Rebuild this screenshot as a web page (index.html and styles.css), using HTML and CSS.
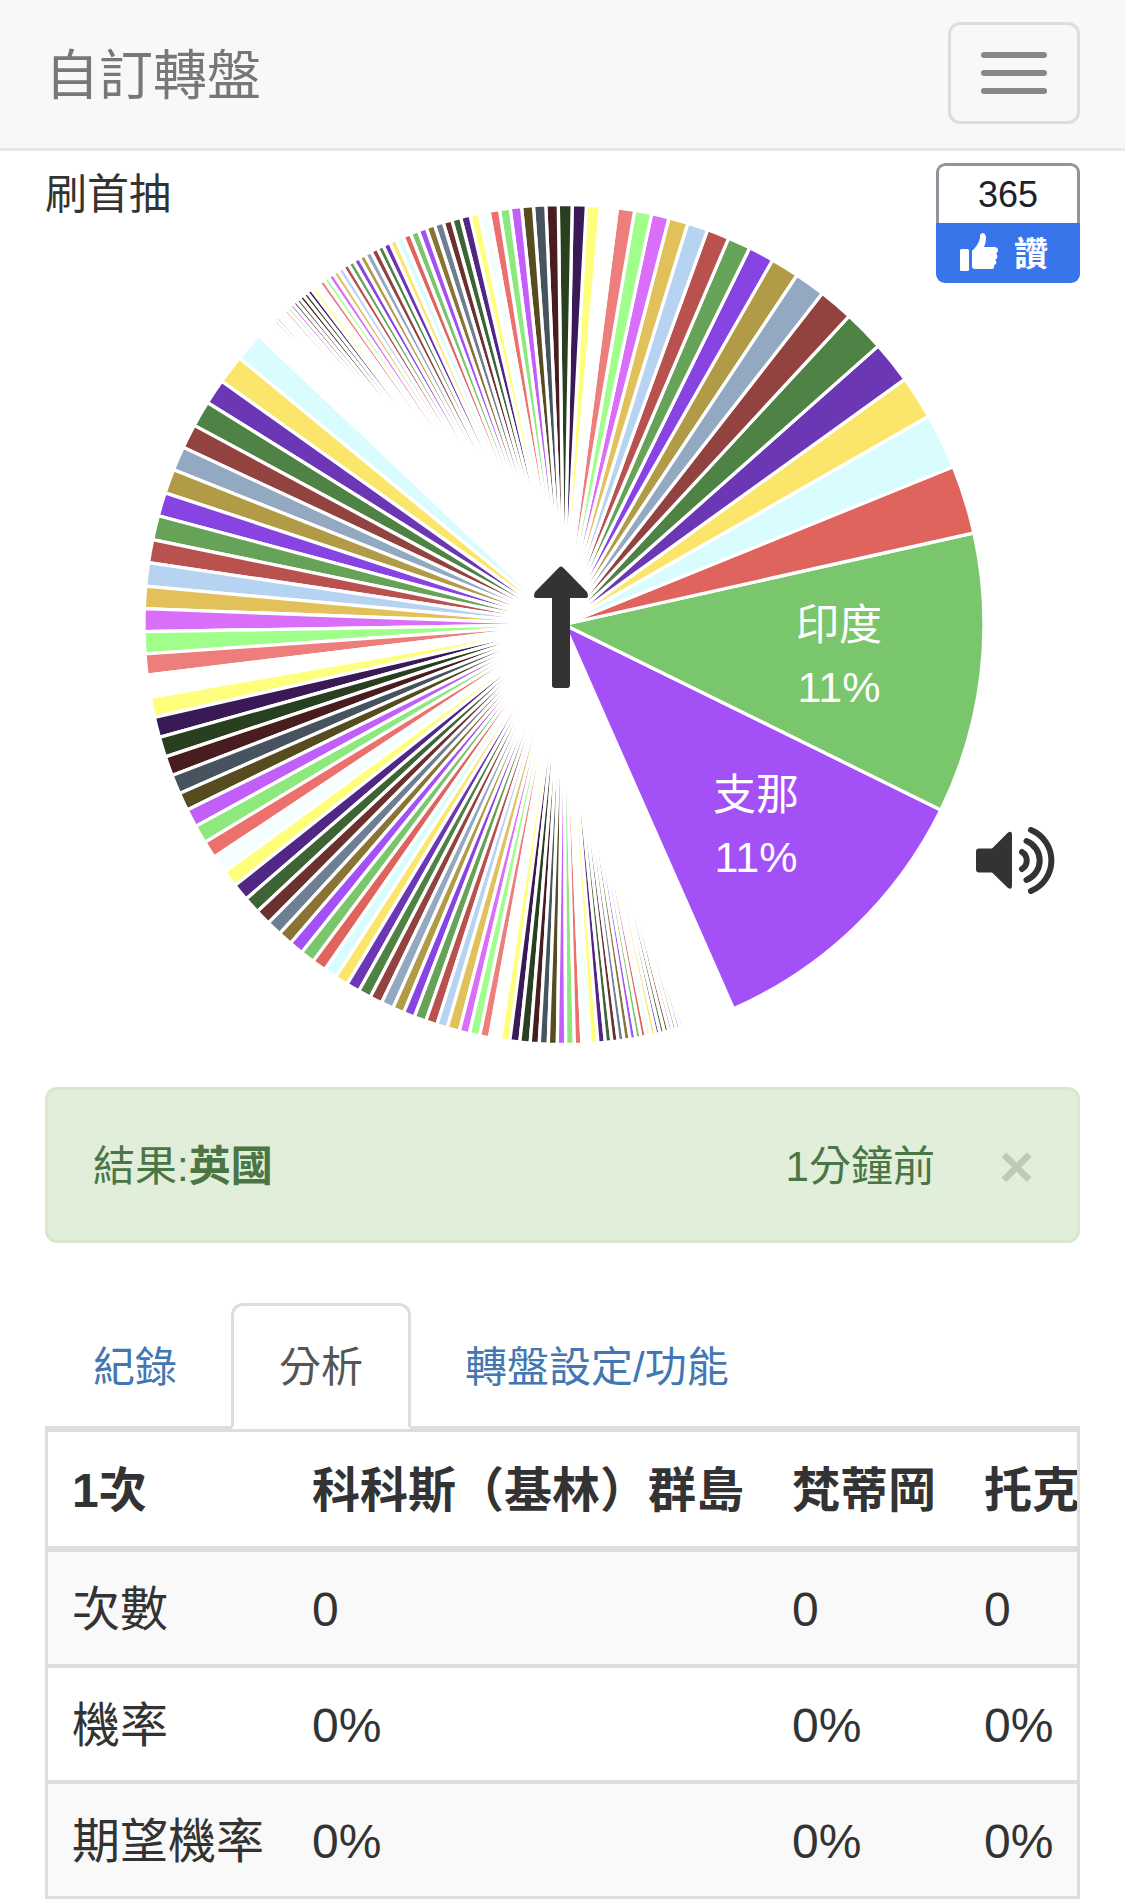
FILE: index.html
```html
<!DOCTYPE html>
<html lang="zh-Hant">
<head>
    <meta charset="UTF-8">
    <meta name="viewport" content="width=device-width, initial-scale=1.0">
    <title>自訂轉盤</title>
    <link rel="stylesheet" href="styles.css">
</head>
<body>

    <nav class="navbar">
        <a class="navbar-brand" href="#">自訂轉盤</a>
        <button type="button" class="navbar-toggle" aria-label="Menu">
            <span class="icon-bar"></span>
            <span class="icon-bar"></span>
            <span class="icon-bar"></span>
        </button>
    </nav>

    <main class="container">
        <!-- Wheel -->
        <section class="stage">
            <svg class="wheel" viewBox="0 0 1035 936">
                <g id="slices" class="slices"></g>
                <g class="slice-label">
                    <text x="794" y="489">印度</text>
                    <text x="794" y="551">11%</text>
                    <text x="711" y="659">支那</text>
                    <text x="711" y="721">11%</text>
                </g>
                <path class="arrow" d="M514 416.500 Q516 414.500 518 416.500 L542 441 Q544.500 446.500 541 447 H525 V534 Q525 537 522 537 H510 Q507 537 507 534 V447 H491 Q487.500 446.500 490 441 Z"/>
            </svg>
            <h1 class="title">刷首抽</h1>
            <div class="like">
                <span class="like-count">365</span>
                <button type="button" class="like-btn">
                    <svg class="like-icon" viewBox="0 0 38 38">
                        <rect x="0" y="16" width="9" height="22" rx="1.500"/>
                        <path d="M12 18 C16 14 19 10 20 5 L20 2 Q21 0 23 0 Q26 1 26 5 Q26 10 24 14 H34 Q38 14 38 17 Q38 20 36 20.500 Q38 22 37 25 Q37 26 35 26.500 Q37 28 36 31 Q35 32 34 32 Q35 36 31 36 H15 Q12 36 12 33 Z"/>
                    </svg>
                    讚
                </button>
            </div>
            <button type="button" class="sound" aria-label="Sound">
                <svg class="sound-icon" viewBox="0 0 79 67">
                    <path class="sound-body" d="M3 21.500 H16 L32 5.500 Q36 3 36 8 V58 Q36 63.500 32 61 L16 45.500 H3 Q0 45.500 0 42.500 V24.500 Q0 21.500 3 21.500 Z"/>
                    <path class="sound-wave" d="M46 25 A10 10 0 0 1 46 42 M50.500 14 A21 21 0 0 1 50.500 53 M55 3 A33 33 0 0 1 55 64"/>
                </svg>
            </button>
        </section>

        <!-- Last result -->
        <div class="alert">
            <span>結果:<strong>英國</strong></span>
            <span class="alert-time">1分鐘前</span>
            <button type="button" class="close" aria-label="Close">×</button>
        </div>

        <!-- Tabs -->
        <ul class="nav-tabs">
            <li><a href="#log">紀錄</a></li>
            <li class="active"><a href="#stats">分析</a></li>
            <li><a href="#settings">轉盤設定/功能</a></li>
        </ul>

        <div class="table-responsive" id="stats">
            <table class="table">
                <thead>
                    <tr>
                        <th>1次</th>
                        <th>科科斯（基林）群島</th>
                        <th>梵蒂岡</th>
                        <th>托克勞</th>
                    </tr>
                </thead>
                <tbody>
                    <tr>
                        <td>次數</td>
                        <td>0</td>
                        <td>0</td>
                        <td>0</td>
                    </tr>
                    <tr>
                        <td>機率</td>
                        <td>0%</td>
                        <td>0%</td>
                        <td>0%</td>
                    </tr>
                    <tr>
                        <td>期望機率</td>
                        <td>0%</td>
                        <td>0%</td>
                        <td>0%</td>
                    </tr>
                </tbody>
            </table>
        </div>
    </main>

    <script src="wheel.js"></script>
</body>
</html>
```
FILE: styles.css
```css
* {
    box-sizing: border-box;
}

body {
    margin: 0;
    background-color: #fff;
    color: #333;
    font-family: "Liberation Sans", "Noto Sans CJK TC", sans-serif;
    font-size: 42px;
    line-height: 60px;
}

button {
    font-family: inherit;
    cursor: pointer;
}

a {
    color: #4277b3;
    text-decoration: none;
}

/* Navbar */
.navbar {
    display: flex;
    justify-content: space-between;
    align-items: center;
    padding: 22px 45px 24px;
    background-color: #f8f8f8;
    border-bottom: 3px solid #e7e7e7;
}

.navbar-brand {
    padding-top: 6px;
    color: #777;
    font-size: 54px;
}

.navbar-toggle {
    display: flex;
    flex-direction: column;
    gap: 12px;
    padding: 27px 30px;
    background: none;
    border: 3px solid #ddd;
    border-radius: 12px;
}

.icon-bar {
    width: 66px;
    height: 6px;
    border-radius: 3px;
    background-color: #888;
}

.container {
    padding: 0 45px;
}

/* Wheel, with its title and buttons on top of it */
.stage {
    display: grid;
}

.stage > * {
    grid-area: 1 / 1;
}

.wheel {
    display: block;
    width: 100%;
}

.slices {
    stroke: #fff;
    stroke-width: 3.3;
}

.slice-label {
    fill: #fff;
    font-size: 43px;
    text-anchor: middle;
}

.arrow {
    fill: #333;
}

.title {
    justify-self: start;
    align-self: start;
    margin: 14px 0 0;
    font-size: 42px;
    font-weight: normal;
}

.like {
    justify-self: end;
    align-self: start;
    display: flex;
    flex-direction: column;
    width: 144px;
    margin-top: 12px;
    border-radius: 9px;
    overflow: hidden;
}

.like-count {
    border: 3px solid #90949c;
    border-bottom: 0;
    border-radius: 9px 9px 0 0;
    color: #1d2129;
    font-size: 36px;
    line-height: 57px;
    text-align: center;
    height: 60px;
}

.like-btn {
    display: flex;
    justify-content: center;
    align-items: center;
    gap: 16px;
    height: 60px;
    padding: 0 8px 3px 0;
    background-color: #3875ea;
    border: 0;
    color: #fff;
    font-size: 34px;
    font-weight: bold;
}

.like-icon {
    width: 38px;
    fill: #fff;
}

.sound {
    justify-self: end;
    align-self: end;
    margin: 0 25px 193px 0;
    padding: 0;
    background: none;
    border: 0;
}

.sound-icon {
    display: block;
    width: 79px;
}

.sound-body {
    fill: #333;
}

.sound-wave {
    fill: none;
    stroke: #333;
    stroke-width: 6;
    stroke-linecap: round;
}

/* Last result */
.alert {
    display: flex;
    align-items: center;
    padding: 47px 43px 43px 45px;
    margin-bottom: 60px;
    background-color: #e1efda;
    border: 3px solid #d8e8c8;
    border-radius: 12px;
    color: #4a7544;
}

.alert-time {
    margin-left: auto;
}

.close {
    margin-left: 64px;
    padding: 0;
    background: none;
    border: 0;
    color: #000;
    font-size: 60px;
    font-weight: bold;
    line-height: 60px;
    opacity: 0.15;
}

/* Tabs */
.nav-tabs {
    display: flex;
    gap: 6px;
    margin: 0;
    padding: 0;
    list-style: none;
    border-bottom: 3px solid #ddd;
}

.nav-tabs li {
    margin-bottom: -3px;
}

.nav-tabs a {
    display: block;
    padding: 32px 45px 28px;
    border: 3px solid transparent;
    border-radius: 12px 12px 0 0;
    white-space: nowrap;
}

.nav-tabs .active a {
    color: #555;
    background-color: #fff;
    border-color: #ddd;
    border-bottom-color: #fff;
}

/* Statistics */
.table-responsive {
    border: 3px solid #ddd;
    overflow-x: auto;
    scrollbar-width: none;
}

.table {
    min-width: 100%;
    border-spacing: 0;
    font-size: 48px;
    white-space: nowrap;
}

.table th,
.table td {
    padding: 26px 24px 22px;
    text-align: left;
    line-height: 64px;
    border-top: 4px solid #ddd;
}

.table th {
    line-height: 66px;
    border-top: 0;
    border-bottom: 6px solid #ddd;
}

.table tbody tr:first-child td {
    border-top: 0;
}

.table tbody tr:nth-child(odd) {
    background-color: #f9f9f9;
}
```
FILE: wheel.js
```javascript
const CX = 519;
const CY = 473.5;
const RADIUS = 420;

// Slice colors, repeated round the wheel
const colors = [
    '#a450f7', '#7ac66c', '#e0645e', '#d9fdff', '#fbe66b', '#6c37b4', '#4f8346',
    '#92423f', '#93a9c1', '#b29b46', '#8843e3', '#66a358', '#b9524f', '#b6d4f2',
    '#e2c15b', '#d96ff8', '#a0ff8b', '#ee7e7c', '#ffffff', '#ffff7e', '#391a57',
    '#284020', '#491d1f', '#47535f', '#574b20', '#c25ff9', '#8de97e', '#ec706c',
    '#f6ffff', '#ffff7a', '#512786', '#3d6434', '#6b312f', '#6e7f93', '#8a7435'
];

// Each group: index of its first color, then the slice edges in degrees (counterclockwise)
const groups = [
    {
        first: 0,
        edges: [
            -66.2, -26.2, 12.59, 22.07, 29.73, 35.75, 41.56, 47.25, 52.05, 56.31, 60.22,
            63.75, 66.92, 70.01, 72.86, 75.52, 77.96, 80.32, 82.68, 85.02, 86.94, 88.88,
            90.78, 92.49, 94.18, 95.81, 97.37, 98.85, 100.28, 101.68, 102.94, 104.26,
            105.51, 106.72, 107.96, 109.16, 110.31, 111.45, 112.53, 113.58, 114.53,
            115.53, 116.4, 117.37, 118.3, 119.18, 120.08, 120.92, 121.76, 122.57,
            123.36, 124.18, 124.9, 125.65, 126.37, 127.04, 127.73, 128.37, 129.03,
            129.64, 130.22, 130.79, 131.34, 131.87, 132.38, 132.88, 133.37, 133.85,
            134.32, 134.78, 135.23, 135.67, 136.1, 136.5
        ]
    },
    {
        first: 3,
        edges: [
            136.6, 140.63, 144.6, 148.1, 151.7, 155.05, 158.38, 161.73, 164.99, 168.35,
            171.52, 174.77, 177.83, 180.98, 184.02, 186.93, 189.98, 192.77, 195.58,
            198.37, 201.08, 203.73, 206.22, 208.72, 211.25, 213.62, 216.11, 218.42,
            220.81, 223.11, 225.27, 227.38, 229.38, 231.36, 233.32, 235.28, 237.08,
            238.91, 240.76, 242.53, 244.26, 245.97, 247.57, 249.13, 250.79, 252.38,
            253.85, 255.56, 256.97, 258.42, 259.77, 261.29, 262.58, 263.96, 265.38,
            266.62, 267.85, 269.09, 270.23, 271.42, 272.45, 273.6, 274.64, 275.66,
            276.55, 277.42, 278.24, 279.07, 279.85, 280.58, 281.31, 281.95, 282.64,
            283.23, 283.87, 284.48, 285.02, 285.57, 286.08, 286.56, 287
        ]
    }
];

function point(deg) {
    const rad = deg * Math.PI / 180;
    return (CX + RADIUS * Math.cos(rad)) + ' ' + (CY - RADIUS * Math.sin(rad));
}

const holder = document.getElementById('slices');

groups.forEach(group => {
    for (let i = 0; i < group.edges.length - 1; i++) {
        const slice = document.createElementNS('http://www.w3.org/2000/svg', 'path');
        slice.setAttribute('d', 'M' + CX + ' ' + CY + ' L' + point(group.edges[i]) +
            ' A' + RADIUS + ' ' + RADIUS + ' 0 0 0 ' + point(group.edges[i + 1]) + ' Z');
        slice.setAttribute('fill', colors[(group.first + i) % colors.length]);
        holder.appendChild(slice);
    }
});
```
